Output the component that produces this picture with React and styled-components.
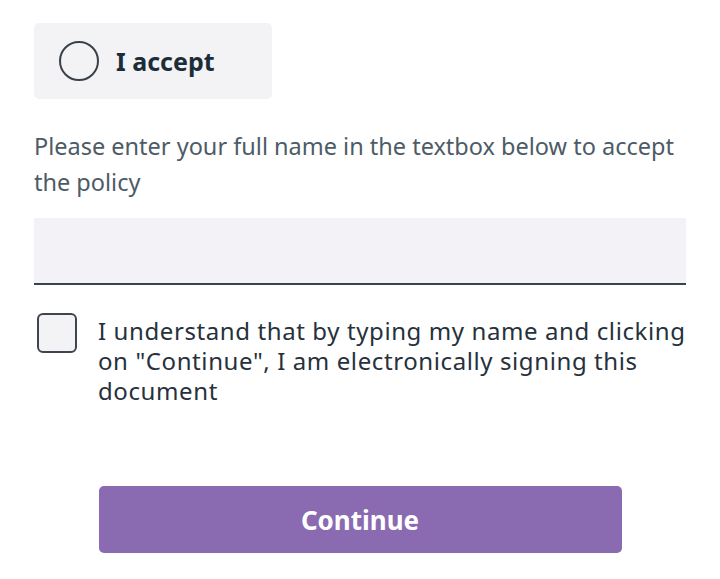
import React, { useState } from "react";
import styled, { createGlobalStyle } from "styled-components";

const GlobalStyle = createGlobalStyle`
  body {
    margin: 0;
    background: #ffffff;
    font-family: "Noto Sans", "Open Sans", sans-serif;
  }
`;

export default function App() {
  const [accepted, setAccepted] = useState(false);
  const [signed, setSigned] = useState(false);
  const [name, setName] = useState("");

  return (
    <Page>
      <GlobalStyle />
      <AcceptBox onClick={() => setAccepted(!accepted)}>
        <Radio $on={accepted} />
        <AcceptLabel>I accept</AcceptLabel>
      </AcceptBox>

      <Hint>Please enter your full name in the textbox below to accept the policy</Hint>

      <NameInput
        type="text"
        value={name}
        onChange={(e) => setName(e.target.value)}
      />

      <ConfirmRow onClick={() => setSigned(!signed)}>
        <Check $on={signed} />
        <ConfirmText>
          I understand that by typing my name and clicking on "Continue", I am
          electronically signing this document
        </ConfirmText>
      </ConfirmRow>

      <Footer>
        <ContinueBtn>Continue</ContinueBtn>
      </Footer>
    </Page>
  );
}

const Page = styled.div`
  width: 720px;
  box-sizing: border-box;
  padding: 23px 34px 0 34px;
  display: flex;
  flex-direction: column;
`;

const AcceptBox = styled.div`
  width: 238px;
  height: 76px;
  box-sizing: border-box;
  padding-left: 25px;
  background: #f3f3f6;
  border-radius: 5px;
  display: flex;
  align-items: center;
  gap: 17px;
  cursor: pointer;
`;

const Radio = styled.span`
  width: 40px;
  height: 40px;
  box-sizing: border-box;
  border: 2px solid #3a414a;
  border-radius: 50%;
  background: ${(p) => (p.$on ? "#8a6ab0" : "transparent")};
`;

const AcceptLabel = styled.span`
  font-size: 25px;
  font-weight: 700;
  color: #1c2d3a;
`;

const Hint = styled.p`
  margin: 29px 0 0 0;
  font-size: 23.5px;
  line-height: 36px;
  color: #4d5b66;
`;

const NameInput = styled.input`
  margin-top: 18px;
  width: 652px;
  height: 67px;
  box-sizing: border-box;
  border: none;
  border-bottom: 2px solid #3a4150;
  background: #f3f3f7;
  font-size: 22px;
  font-family: inherit;
  padding: 0 16px;
  outline: none;
`;

const ConfirmRow = styled.div`
  margin-top: 27px;
  display: flex;
  align-items: flex-start;
  gap: 21px;
  cursor: pointer;
`;

const Check = styled.span`
  flex: none;
  margin: 1px 0 0 3px;
  width: 40px;
  height: 40px;
  box-sizing: border-box;
  border: 2px solid #3f4550;
  border-radius: 6px;
  background: ${(p) => (p.$on ? "#8a6ab0" : "#f3f3f6")};
`;

const ConfirmText = styled.span`
  flex: none;
  width: 610px;
  padding-top: 4px;
  font-size: 24px;
  line-height: 30px;
  color: #26313c;
  letter-spacing: 0.6px;
`;

const Footer = styled.div`
  margin-top: 80px;
  display: flex;
  justify-content: center;
`;

const ContinueBtn = styled.button`
  width: 523px;
  height: 67px;
  background: #8a6ab0;
  color: #ffffff;
  border: none;
  border-radius: 5px;
  font-family: inherit;
  font-size: 26px;
  font-weight: 700;
  cursor: pointer;
`;
